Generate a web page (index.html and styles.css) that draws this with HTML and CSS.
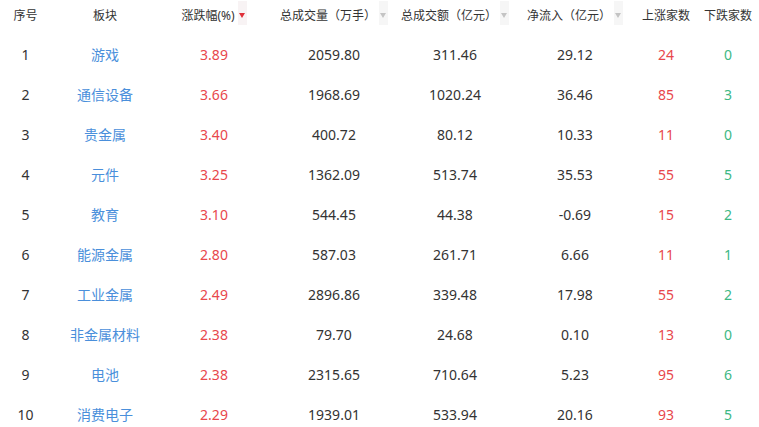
FILE: index.html
```html
<!DOCTYPE html>
<html lang="zh-CN">
<head>
<meta charset="utf-8">
<title>板块涨幅</title>
<link rel="stylesheet" href="styles.css">
</head>
<body>
<div class="table">
  <div class="row head">
    <div class="cell">序号</div>
    <div class="cell">板块</div>
    <div class="cell c3">涨跌幅(%)<span class="sort active"><i></i></span></div>
    <div class="cell">总成交量（万手）<span class="sort"><i></i></span></div>
    <div class="cell c5">总成交额（亿元）<span class="sort"><i></i></span></div>
    <div class="cell">净流入（亿元）<span class="sort"><i></i></span></div>
    <div class="cell">上涨家数</div>
    <div class="cell c8">下跌家数</div>
  </div>
  <div class="body">
    <div class="row"><div class="cell">1</div><div class="cell name">游戏</div><div class="cell c3 up">3.89</div><div class="cell">2059.80</div><div class="cell c5">311.46</div><div class="cell">29.12</div><div class="cell up">24</div><div class="cell c8 down">0</div></div>
    <div class="row"><div class="cell">2</div><div class="cell name">通信设备</div><div class="cell c3 up">3.66</div><div class="cell">1968.69</div><div class="cell c5">1020.24</div><div class="cell">36.46</div><div class="cell up">85</div><div class="cell c8 down">3</div></div>
    <div class="row"><div class="cell">3</div><div class="cell name">贵金属</div><div class="cell c3 up">3.40</div><div class="cell">400.72</div><div class="cell c5">80.12</div><div class="cell">10.33</div><div class="cell up">11</div><div class="cell c8 down">0</div></div>
    <div class="row"><div class="cell">4</div><div class="cell name">元件</div><div class="cell c3 up">3.25</div><div class="cell">1362.09</div><div class="cell c5">513.74</div><div class="cell">35.53</div><div class="cell up">55</div><div class="cell c8 down">5</div></div>
    <div class="row"><div class="cell">5</div><div class="cell name">教育</div><div class="cell c3 up">3.10</div><div class="cell">544.45</div><div class="cell c5">44.38</div><div class="cell">-0.69</div><div class="cell up">15</div><div class="cell c8 down">2</div></div>
    <div class="row"><div class="cell">6</div><div class="cell name">能源金属</div><div class="cell c3 up">2.80</div><div class="cell">587.03</div><div class="cell c5">261.71</div><div class="cell">6.66</div><div class="cell up">11</div><div class="cell c8 down">1</div></div>
    <div class="row"><div class="cell">7</div><div class="cell name">工业金属</div><div class="cell c3 up">2.49</div><div class="cell">2896.86</div><div class="cell c5">339.48</div><div class="cell">17.98</div><div class="cell up">55</div><div class="cell c8 down">2</div></div>
    <div class="row"><div class="cell">8</div><div class="cell name">非金属材料</div><div class="cell c3 up">2.38</div><div class="cell">79.70</div><div class="cell c5">24.68</div><div class="cell">0.10</div><div class="cell up">13</div><div class="cell c8 down">0</div></div>
    <div class="row"><div class="cell">9</div><div class="cell name">电池</div><div class="cell c3 up">2.38</div><div class="cell">2315.65</div><div class="cell c5">710.64</div><div class="cell">5.23</div><div class="cell up">95</div><div class="cell c8 down">6</div></div>
    <div class="row"><div class="cell">10</div><div class="cell name">消费电子</div><div class="cell c3 up">2.29</div><div class="cell">1939.01</div><div class="cell c5">533.94</div><div class="cell">20.16</div><div class="cell up">93</div><div class="cell c8 down">5</div></div>
  </div>
</div>
</body>
</html>
```
FILE: styles.css
```css
html, body {
  margin: 0;
  padding: 0;
  background: #ffffff;
}
body {
  font-family: "Noto Sans", "Noto Sans CJK SC", sans-serif;
  color: #333333;
}
.table {
  width: 758px;
}
.row {
  display: grid;
  grid-template-columns: 51px 108px 99px 152px 100px 130px 52px 66px;
  height: 40px;
}
.head {
  height: 30px;
  font-size: 12px;
  color: #333333;
}
.body {
  padding-top: 4px;
  font-size: 14px;
}
.cell {
  display: flex;
  align-items: center;
  justify-content: center;
  white-space: nowrap;
  min-width: 0;
}
.c3 {
  padding-left: 11px;
}
.c5 {
  padding-right: 10px;
}
.c8 {
  padding-left: 6px;
}
.sort {
  flex: none;
  width: 9px;
  height: 24px;
  margin-left: 3px;
  margin-bottom: 4px;
  background: #f6f6f6;
  position: relative;
}
.sort i {
  position: absolute;
  left: 1px;
  top: 12px;
  width: 0;
  height: 0;
  border-left: 3.5px solid transparent;
  border-right: 3.5px solid transparent;
  border-top: 5px solid #c4c4c4;
}
.sort.active {
  background: #f8f3f4;
}
.sort.active i {
  border-top-color: #e0303a;
}
.name {
  color: #4a8fdb;
}
.up {
  color: #e8474c;
}
.down {
  color: #3db884;
}
```
